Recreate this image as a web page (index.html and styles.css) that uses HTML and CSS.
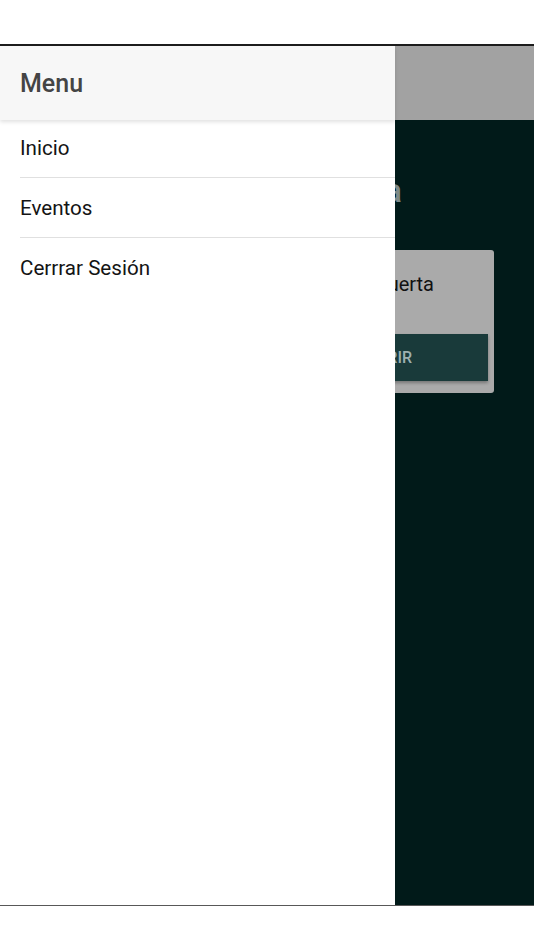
FILE: index.html
```html
<!DOCTYPE html>
<html lang="es">
<head>
<meta charset="utf-8">
<title>Menu</title>
<link rel="stylesheet" href="styles.css">
</head>
<body>
<div class="top-gap"></div>
<div class="screen">
  <div class="app">
    <div class="app-header"></div>
    <div class="app-content">
      <h1 class="title">Bienvenida</h1>
      <div class="card">
        <p class="card-text">Abrir la puerta</p>
        <div class="card-button">ABRIR</div>
      </div>
    </div>
  </div>
  <nav class="drawer">
    <div class="drawer-header">Menu</div>
    <ul class="drawer-list">
      <li class="drawer-item">Inicio</li>
      <li class="drawer-item">Eventos</li>
      <li class="drawer-item no-line">Cerrrar Sesión</li>
    </ul>
  </nav>
</div>
</body>
</html>
```
FILE: styles.css
```css
html, body {
  margin: 0;
  padding: 0;
  background: #ffffff;
  font-family: Roboto, "Noto Sans", "Liberation Sans", sans-serif;
}
.top-gap {
  height: 44px;
}
.screen {
  position: relative;
  height: 859px;
  border-top: 2px solid #1c1c1c;
  border-bottom: 1px solid #585858;
  overflow: hidden;
}
.app {
  display: flex;
  flex-direction: column;
  height: 100%;
}
.app-header {
  height: 74px;
  background: #a2a2a2;
}
.app-content {
  flex: 1;
  background: #011a19;
  display: flex;
  flex-direction: column;
}
.title {
  margin: 0;
  padding: 53px 132px 0 0;
  height: 55px;
  text-align: right;
  font-size: 34px;
  font-weight: 500;
  line-height: 34px;
  color: #7e8a89;
}
.card {
  margin: 22px 40px 0 40px;
  height: 143px;
  background: #aaaaaa;
  border-radius: 3px;
  box-sizing: border-box;
  padding: 0 6px;
  display: flex;
  flex-direction: column;
}
.card-text {
  margin: 0;
  padding: 22px 54px 0 0;
  height: 62px;
  box-sizing: border-box;
  text-align: right;
  font-size: 20px;
  line-height: 24px;
  color: #111111;
}
.card-button {
  margin-top: 22px;
  height: 47px;
  background: #193a3a;
  color: #9db0b0;
  font-size: 16px;
  font-weight: 500;
  line-height: 47px;
  text-align: right;
  padding-right: 76px;
  box-shadow: 0 2px 3px rgba(0, 0, 0, 0.3);
}
.drawer {
  position: absolute;
  left: 0;
  top: 0;
  bottom: 0;
  width: 395px;
  background: #ffffff;
  display: flex;
  flex-direction: column;
}
.drawer-header {
  position: relative;
  z-index: 1;
  height: 74px;
  box-sizing: border-box;
  padding: 2px 0 0 20px;
  background: #f7f7f7;
  color: #444444;
  font-size: 25px;
  font-weight: 500;
  line-height: 72px;
  box-shadow: 0 2px 4px rgba(0, 0, 0, 0.12);
}
.drawer-list {
  list-style: none;
  margin: -2px 0 0 0;
  padding: 0;
}
.drawer-item {
  margin-left: 20px;
  height: 59px;
  line-height: 60px;
  border-bottom: 1px solid #e0e0e0;
  font-size: 20.6px;
  color: #141414;
}
.drawer-item.no-line {
  border-bottom: none;
}
```
